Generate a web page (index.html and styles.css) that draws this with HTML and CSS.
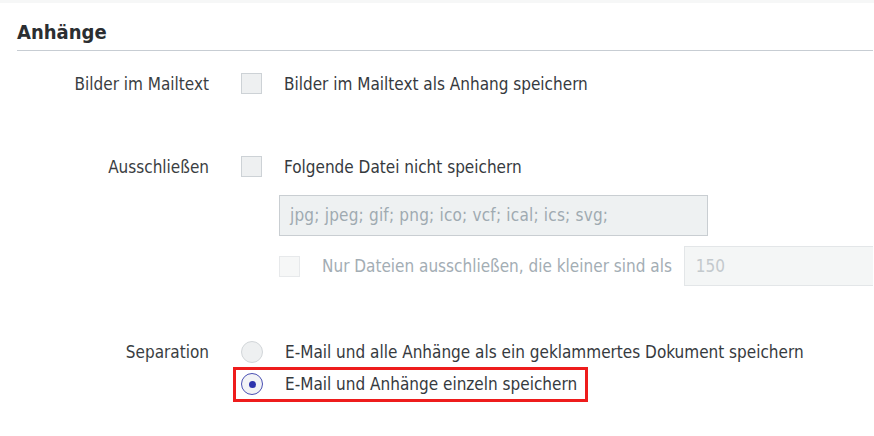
FILE: index.html
```html
<!DOCTYPE html>
<html lang="de">
<head>
<meta charset="utf-8">
<title>Anhänge</title>
<link rel="stylesheet" href="styles.css">
</head>
<body>
<div class="topbar"></div>
<section class="section">
  <h2 class="title">Anhänge</h2>

  <div class="row row-images">
    <div class="label">Bilder im Mailtext</div>
    <div class="ctrl">
      <span class="cb"></span>
      <span class="txt">Bilder im Mailtext als Anhang speichern</span>
    </div>
  </div>

  <div class="row row-exclude">
    <div class="label">Ausschließen</div>
    <div class="ctrl">
      <span class="cb"></span>
      <span class="txt">Folgende Datei nicht speichern</span>
    </div>
  </div>

  <div class="row row-input">
    <div class="label"></div>
    <div class="ctrl indent">
      <div class="field">jpg; jpeg; gif; png; ico; vcf; ical; ics; svg;</div>
    </div>
  </div>

  <div class="row row-sub">
    <div class="label"></div>
    <div class="ctrl indent">
      <span class="cb disabled"></span>
      <span class="txt muted">Nur Dateien ausschließen, die kleiner sind als</span>
      <div class="field small">150</div>
    </div>
  </div>

  <div class="row row-sep">
    <div class="label">Separation</div>
    <div class="ctrl col">
      <div class="opt">
        <span class="radio"></span>
        <span class="txt">E-Mail und alle Anhänge als ein geklammertes Dokument speichern</span>
      </div>
      <div class="opt highlight">
        <span class="radio checked"></span>
        <span class="txt">E-Mail und Anhänge einzeln speichern</span>
      </div>
    </div>
  </div>
</section>
</body>
</html>
```

FILE: styles.css
```css
* { box-sizing: border-box; }
html, body { margin: 0; padding: 0; background: #fff; }
body {
  font-family: "DejaVu Sans Condensed", "DejaVu Sans", sans-serif;
  font-size: 17px;
  color: #363a3e;
  width: 874px;
  height: 436px;
  overflow: hidden;
}
.topbar { height: 3px; background: #f6f7f7; }
.section { padding: 0 1px 0 17px; }
.title {
  margin: 0;
  padding: 17px 0 6px;
  font-size: 20px;
  line-height: 24px;
  font-weight: bold;
  color: #2b2e31;
  border-bottom: 1px solid #c7cdd3;
}
.row { display: flex; align-items: center; }
.label {
  width: 192px;
  flex: none;
  text-align: right;
  margin-right: 32px;
  color: #3a3e42;
}
.ctrl { display: flex; align-items: center; flex: 1; min-width: 0; }
.ctrl.col { flex-direction: column; align-items: flex-start; }
.indent { padding-left: 38px; }
.txt { margin-left: 22px; white-space: nowrap; line-height: 20px; }
.txt.muted { color: #a3adb4; }

.row-images { margin-top: 22px; height: 21px; }
.row-exclude { margin-top: 62px; height: 21px; }
.row-input { margin-top: 18px; }
.row-sub { margin-top: 10px; }
.row-sep { margin-top: 55px; align-items: flex-start; }
.row-sep .label { line-height: 22px; }

.cb {
  width: 21px; height: 21px; flex: none;
  background: #eef0f1;
  border: 1px solid #cdd2d6;
}
.cb.disabled { background: #f6f7f7; border-color: #e7e9eb; }

.field {
  width: 429px; height: 41px;
  border: 1px solid #c9ced2;
  background: #eef1f2;
  color: #9faab1;
  padding: 0 10px;
  line-height: 39px;
  white-space: nowrap;
  letter-spacing: 0.2px;
}
.field.small {
  flex: 1;
  width: auto;
  min-width: 0;
  height: 40px;
  margin-left: 12px;
  background: #f4f6f6;
  border-color: #e3e6e8;
  border-right: 0;
  color: #c3c9cd;
  line-height: 38px;
  padding-left: 11px;
  letter-spacing: 0;
}

.opt { display: flex; align-items: center; height: 22px; }
.radio {
  width: 22px; height: 22px; flex: none;
  border-radius: 50%;
  background: #eef0f1;
  border: 1px solid #d2d6d9;
  position: relative;
}
.radio.checked { background: #f2f3f6; border-color: #4a50b3; }
.radio.checked::after {
  content: "";
  position: absolute;
  left: 50%; top: 50%;
  width: 7px; height: 7px;
  margin: -3.5px 0 0 -3.5px;
  border-radius: 50%;
  background: #2d34ad;
}
.highlight {
  height: auto;
  margin: 4px 0 0 -8px;
  padding: 3px 8px 4px 5px;
  border: 3px solid #ee1c1c;
}
```
